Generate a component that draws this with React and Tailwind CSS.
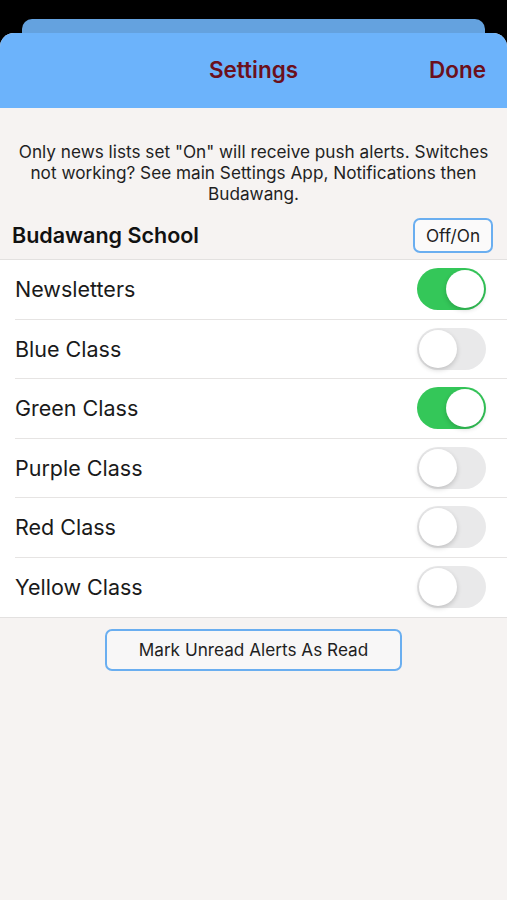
import { useState } from 'react';

const lists = [
  { name: 'Newsletters', on: true },
  { name: 'Blue Class', on: false },
  { name: 'Green Class', on: true },
  { name: 'Purple Class', on: false },
  { name: 'Red Class', on: false },
  { name: 'Yellow Class', on: false },
];

const Toggle = ({ on, onChange }) => (
  <button
    type="button"
    onClick={onChange}
    className={`relative h-[42px] w-[69px] shrink-0 rounded-full transition-colors ${
      on ? 'bg-[#34c759]' : 'bg-[#e9e9ea]'
    }`}
  >
    <span
      className={`absolute top-[2px] h-[38px] w-[38px] rounded-full bg-white shadow-[0_2px_5px_rgba(0,0,0,0.18)] transition-all ${
        on ? 'left-[29px]' : 'left-[2px]'
      }`}
    />
  </button>
);

const App = () => {
  const [items, setItems] = useState(lists);

  const toggle = (i) =>
    setItems((prev) => prev.map((it, idx) => (idx === i ? { ...it, on: !it.on } : it)));

  return (
    <div className="min-h-[900px] bg-black font-['Inter','Liberation_Sans',sans-serif]">
      {/* stacked sheet behind */}
      <div className="pt-[19px]">
        <div className="mx-[22px] h-[14px] rounded-t-[10px] bg-[#64a2df]" />
      </div>

      <div className="flex min-h-[867px] flex-col overflow-hidden rounded-t-[14px] bg-[#f6f3f2]">
        {/* Header */}
        <div className="grid h-[75px] grid-cols-[1fr_auto_1fr] items-center bg-[#6cb3fb] px-[21px] pb-[2px]">
          <div />
          <h1 className="text-[22.5px] font-semibold text-[#6b101c]">Settings</h1>
          <button type="button" className="justify-self-end text-[22.5px] font-semibold text-[#6b101c]">
            Done
          </button>
        </div>

        {/* Info */}
        <p className="px-[14px] pt-[33px] text-center text-[17.2px] leading-[21px] text-[#1f1f1f]">
          Only news lists set "On" will receive push alerts. Switches not working? See main Settings App, Notifications then Budawang.
        </p>

        <div className="flex items-center justify-between pl-[12px] pr-[14px] pt-[14px] pb-[6px]">
          <h2 className="text-[21.5px] font-semibold text-[#111]">Budawang School</h2>
          <button
            type="button"
            className="h-[35px] w-[80px] rounded-[7px] border-2 border-[#6aaef0] bg-[#fbfafa] text-[17.2px] text-[#1f1f1f]"
          >
            Off/On
          </button>
        </div>

        {/* Lists */}
        <div className="border-y border-[#e3e1e0] bg-white">
          {items.map((it, i) => (
            <div key={it.name} className="pl-[15px]">
              <div
                className={`flex h-[59.5px] items-center justify-between pr-[21px] ${
                  i < items.length - 1 ? 'border-b border-[#e6e4e3]' : ''
                }`}
              >
                <span className="text-[21.5px] text-[#1a1a1a]">{it.name}</span>
                <Toggle on={it.on} onChange={() => toggle(i)} />
              </div>
            </div>
          ))}
        </div>

        <div className="flex justify-center pt-[11px]">
          <button
            type="button"
            className="h-[42px] w-[297px] rounded-[7px] border-2 border-[#6aaef0] bg-[#f8f7f7] text-[17.2px] text-[#1f1f1f]"
          >
            Mark Unread Alerts As Read
          </button>
        </div>
      </div>
    </div>
  );
};

export default App;
